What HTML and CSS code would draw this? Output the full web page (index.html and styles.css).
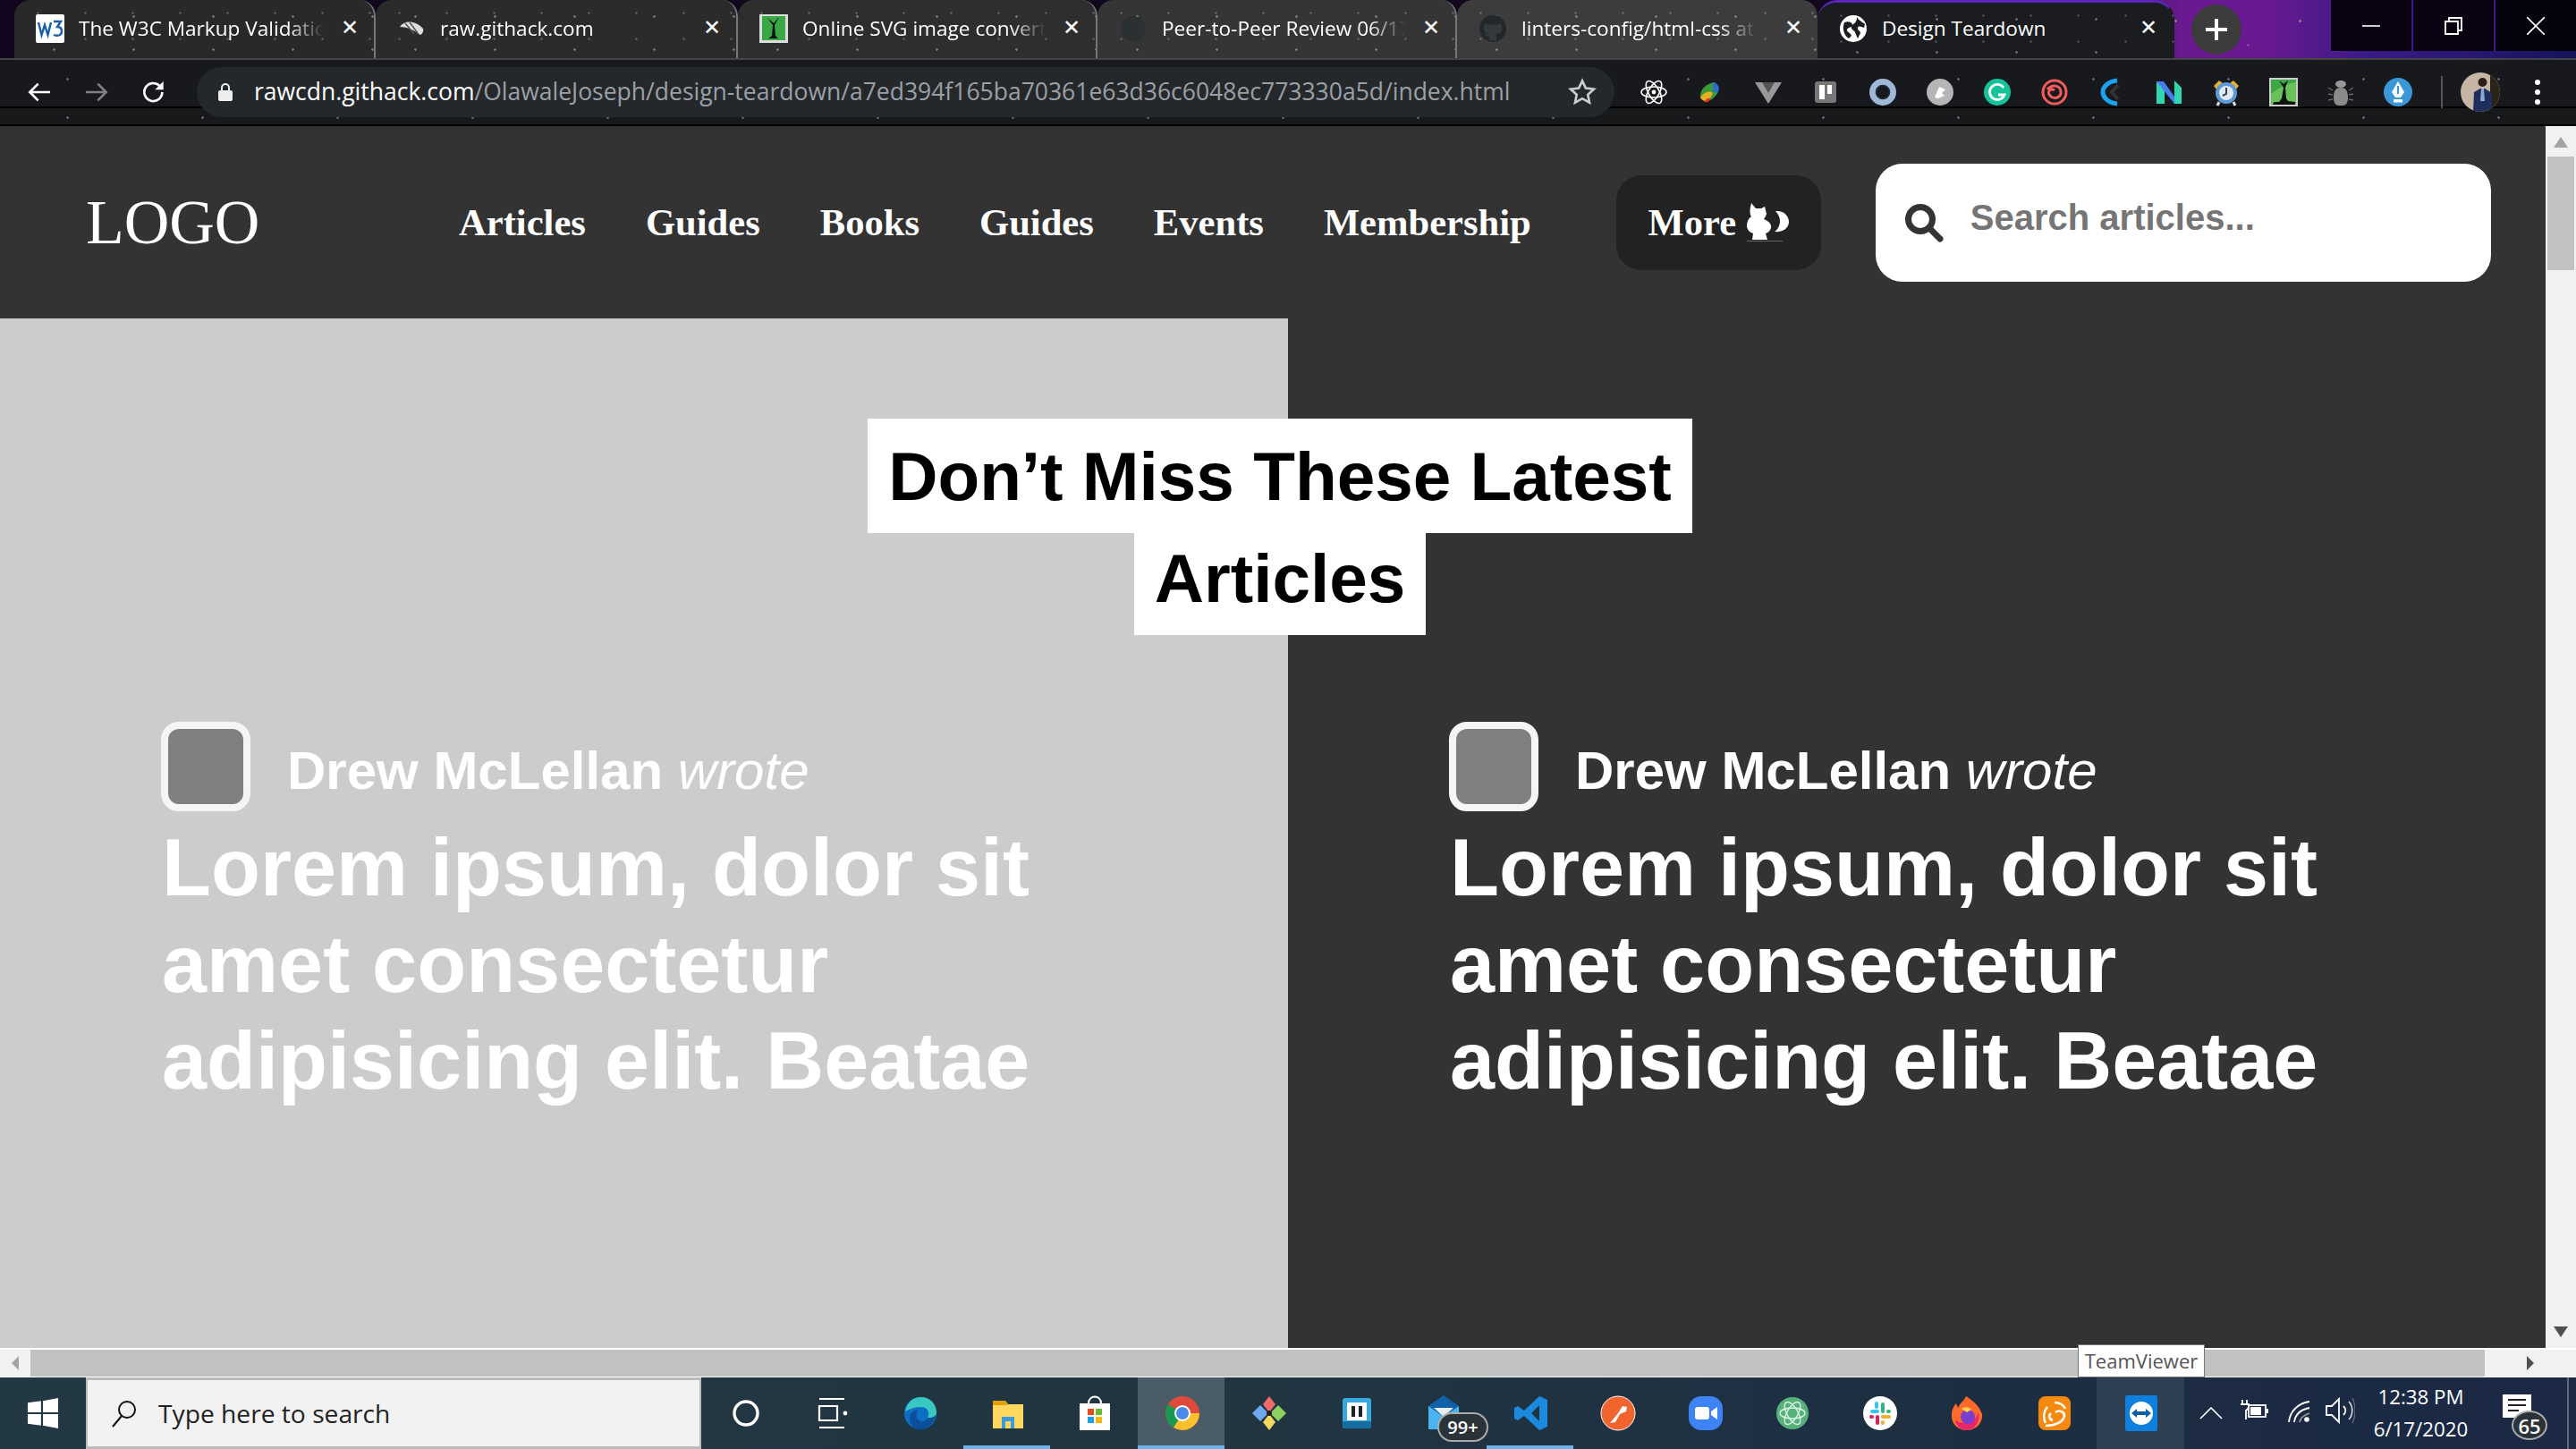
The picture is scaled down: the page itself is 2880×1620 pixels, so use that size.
FILE: index.html
```html
<!DOCTYPE html>
<html lang="en">
<head>
<meta charset="utf-8">
<title>Design Teardown</title>
<link rel="stylesheet" href="styles.css">
</head>
<body>
<div class="window">
  <div class="tabstrip">
    <div class="tab t1">
      <svg class="fav" viewBox="0 0 32 32"><rect width="32" height="32" rx="2" fill="#fff"/><path d="M3 9l3.5 14L10 12l3.5 11L17 9" fill="none" stroke="#1a5fa8" stroke-width="2.4"/><path d="M20 8h8l-4 6c3 0 5 2 5 5 0 4-4 6-9 4" fill="none" stroke="#1a5fa8" stroke-width="2.4"/></svg>
      <span class="tab-title">The W3C Markup Validation</span><span class="x">✕</span>
    </div>
    <div class="tab t2">
      <svg class="fav" viewBox="0 0 32 32"><path d="M3 14C8 7 19 6 29 16c1 3-1 6-3 7C18 17 10 14 3 14z" fill="#ddd"/><path d="M9 10l10 12M14 9l9 12" stroke="#555" stroke-width="1.5"/></svg>
      <span class="tab-title">raw.githack.com</span><span class="x">✕</span>
    </div>
    <div class="tab t3">
      <svg class="fav" viewBox="0 0 32 32"><rect width="32" height="32" fill="#ddd"/><rect x="3" y="2" width="26" height="27" fill="#3aa845"/><path d="M15 12l-6-8 7 6 6-7-5 9 1 12 3 3H10l4-3z" fill="#111"/></svg>
      <span class="tab-title">Online SVG image converter</span><span class="x">✕</span>
    </div>
    <div class="tab t4">
      <svg class="fav" viewBox="0 0 32 32"><circle cx="16" cy="16" r="14" fill="#2b3032"/></svg>
      <span class="tab-title">Peer-to-Peer Review 06/17</span><span class="x">✕</span>
    </div>
    <div class="tab t5">
      <svg class="fav" viewBox="0 0 32 32"><circle cx="16" cy="16" r="15" fill="#22272a"/><path d="M12 29v-5c-4 1-5-1-6-3 3 1 4 2 6 1-5-1-7-4-6-9l1-3 4 2c3-1 7-1 10 0l4-2 1 3c1 5-1 8-6 9v7z" fill="#34393c"/></svg>
      <span class="tab-title">linters-config/html-css at master</span><span class="x">✕</span>
    </div>
    <div class="tab active">
      <svg class="fav" viewBox="0 0 32 32"><circle cx="16" cy="16" r="15" fill="#fff"/><path d="M6 9c5-2 9 0 9 3s-5 2-6 5 4 3 5 7l-3 3C6 24 3 16 6 9zM20 3c2 4 7 6 9 8l-1 4c-3-1-6-3-7 0s3 3 3 6l-3 6c-2-3-2-7-5-9s-3-5 0-7 4-4 4-8z" fill="#1b1e20"/></svg>
      <span class="tab-title">Design Teardown</span><span class="x">✕</span>
    </div>
    <div class="newtab"><svg class="plus" viewBox="0 0 24 24"><path d="M12 0v24M0 12h24" stroke="#fff" stroke-width="4"/></svg></div>
    <div class="winctl">
      <span class="wbtn"><svg class="wicon" viewBox="0 0 20 20"><path d="M0 10h20" stroke="#fff" stroke-width="1.6"/></svg></span>
      <span class="wbtn"><svg class="wicon" viewBox="0 0 20 20"><path d="M1 5h14v14H1zM5 5V1h14v14h-4" fill="none" stroke="#fff" stroke-width="1.8"/></svg></span>
      <span class="wbtn"><svg class="wicon" viewBox="0 0 20 20"><path d="M0 0l20 20M20 0L0 20" stroke="#fff" stroke-width="1.6"/></svg></span>
    </div>
  </div>

  <div class="toolbar">
    <div class="navbtns">
      <svg class="navicon" viewBox="0 0 24 24"><path d="M21 12H4M11 5l-7 7 7 7" fill="none" stroke="#fff" stroke-width="2"/></svg>
      <svg class="navicon" viewBox="0 0 24 24"><path d="M3 12h17M13 5l7 7-7 7" fill="none" stroke="#808080" stroke-width="2"/></svg>
      <svg class="navicon" viewBox="0 0 24 24"><path d="M19 12a7.500 7.500 0 1 1-2.200-5.300" fill="none" stroke="#fff" stroke-width="2"/><path d="M20 3v7h-7z" fill="#fff"/></svg>
    </div>
    <div class="omnibox">
      <svg class="lock" viewBox="0 0 16 22"><path d="M4 10V6a4 4 0 0 1 8 0v4" fill="none" stroke="#eee" stroke-width="2"/><rect x="0" y="9" width="16" height="12" rx="2" fill="#eee"/></svg>
      <span class="url"><span class="host">rawcdn.githack.com</span>/OlawaleJoseph/design-teardown/a7ed394f165ba70361e63d36c6048ec773330a5d/index.html</span>
      <svg class="star" viewBox="0 0 24 24"><path d="M12 2.500l2.900 6.200 6.800.8-5 4.600 1.300 6.700-6-3.400-6 3.400 1.300-6.700-5-4.600 6.800-.8z" fill="none" stroke="#ccc" stroke-width="2"/></svg>
    </div>
    <div class="exts">
      <svg class="ext" viewBox="0 0 32 32"><g fill="none" stroke="#fff" stroke-width="1.6"><ellipse cx="16" cy="16" rx="14" ry="6"/><ellipse cx="16" cy="16" rx="14" ry="6" transform="rotate(60 16 16)"/><ellipse cx="16" cy="16" rx="14" ry="6" transform="rotate(120 16 16)"/></g><circle cx="16" cy="16" r="2.4" fill="#fff"/></svg>
      <svg class="ext" viewBox="0 0 32 32"><path d="M4 22C3 12 12 6 20 5c4 5 5 10 2 14-4 5-8 7-12 7z" fill="#3a9a3a"/><path d="M4 22c4-6 10-8 14-5l-4 8c-4 2-8 1-10-3z" fill="#e8b020"/><path d="M18 5c6 1 9 7 5 12l-5-2z" fill="#2a70c8"/><path d="M8 27c2-3 4-5 8-4-2 3-4 5-8 4z" fill="#d83a2a"/></svg>
      <svg class="ext" viewBox="0 0 32 32"><path d="M1 5h30L16 29z" fill="#999"/><path d="M9 5h14l-7 12z" fill="#555"/></svg>
      <svg class="ext" viewBox="0 0 32 32"><rect x="4" y="4" width="24" height="24" rx="3" fill="#777"/><rect x="9" y="8" width="6" height="16" fill="#fff"/><rect x="18" y="8" width="5" height="10" fill="#fff"/></svg>
      <svg class="ext" viewBox="0 0 32 32"><circle cx="16" cy="16" r="11.500" fill="none" stroke="#9fb8d8" stroke-width="7"/><circle cx="16" cy="16" r="7.500" fill="none" stroke="#20303c" stroke-width="1.6"/></svg>
      <svg class="ext" viewBox="0 0 32 32"><circle cx="16" cy="16" r="15" fill="#b5b5b5"/><path d="M10 22l5-12 7 3-4 4 3 3-7 3z" fill="#fff"/></svg>
      <svg class="ext" viewBox="0 0 32 32"><circle cx="16" cy="16" r="15" fill="#15c39a"/><path d="M23 11a8.500 8.500 0 1 0 1 8h-7" fill="none" stroke="#fff" stroke-width="2.8"/></svg>
      <svg class="ext" viewBox="0 0 32 32"><g fill="none" stroke="#f25c5c" stroke-width="3"><circle cx="16" cy="16" r="13"/><path d="M8 13c5-6 14-5 15 2s-8 10-12 5 1-9 5-6"/></g></svg>
      <svg class="ext" viewBox="0 0 32 32"><path d="M22 3C12 4 6 10 6 16s6 12 16 13" fill="none" stroke="#1aa3f0" stroke-width="5"/><path d="M23 8l-7 8 7 8" fill="none" stroke="#333" stroke-width="4"/></svg>
      <svg class="ext" viewBox="0 0 32 32"><path d="M2 4l9 7v18H2z" fill="#2fd6b0"/><path d="M2 4h8l12 17v8L2 4z" fill="#4a7af0"/><path d="M22 3l8 8-8 2zM22 13l8-2v18h-8z" fill="#2fd6b0"/></svg>
      <svg class="ext" viewBox="0 0 32 32"><path d="M2 9l6-6 4 3-7 7zM30 9l-6-6-4 3 7 7z" fill="#e8b030"/><path d="M8 27l-2 4M24 27l2 4" stroke="#ddd" stroke-width="3"/><circle cx="16" cy="17" r="12" fill="#5c9ad8"/><circle cx="16" cy="17" r="8" fill="#dfe9f4"/><path d="M16 11v7l-4 2" stroke="#345" stroke-width="2" fill="none"/></svg>
      <svg class="ext" viewBox="0 0 32 32"><rect width="32" height="32" fill="#ccc"/><rect x="2" y="2" width="28" height="28" fill="#3aa845"/><path d="M2 18c8-6 18-12 28-13v25H2z" fill="#6ac15a"/><path d="M16 11l-5-8 5 4 5-4-3 8 1 12 2 3 8 1v3H4l1-3h6l3-4z" fill="#111"/></svg>
      <svg class="ext" viewBox="0 0 32 32"><ellipse cx="16" cy="7" rx="6" ry="4" fill="#999"/><path d="M8 22c0-8 3-11 8-11s8 3 8 11-3 9-8 9-8-1-8-9z" fill="#8a8a8a"/><path d="M2 11l5 3M2 18l5 1M2 25l5-1M30 11l-5 3M30 18l-5 1M30 25l-5-1" stroke="#666" stroke-width="1.4"/></svg>
      <svg class="ext" viewBox="0 0 32 32"><circle cx="16" cy="16" r="16" fill="#3a98d8"/><path d="M16 4l7 12-4 6h-6l-4-6z" fill="#fff"/><path d="M16 9v9" stroke="#3a98d8" stroke-width="2"/><rect x="11" y="24" width="10" height="3.500" fill="#fff"/></svg>
      <span class="ext-divider"></span>
      <svg class="avatar-me" viewBox="0 0 44 44"><defs><clipPath id="me"><circle cx="22" cy="22" r="22"/></clipPath></defs><g clip-path="url(#me)"><rect width="44" height="44" fill="#c6b4a4"/><rect x="33" width="11" height="44" fill="#2a2418"/><path d="M14 44l1-22 7-4h5l8 5v21z" fill="#1d2f5a"/><path d="M23 18h3l1 14h-5z" fill="#8aa8d0"/><circle cx="24.500" cy="11" r="5" fill="#2c1e16"/></g></svg>
      <span class="dots"><i></i><i></i><i></i></span>
    </div>
  </div>

  <div class="viewport">
    <div class="page">
      <header class="site-header">
        <div class="logo">LOGO</div>
        <nav class="site-nav">
          <a>Articles</a><a>Guides</a><a>Books</a><a>Guides</a><a>Events</a><a>Membership</a>
        </nav>
        <button class="more">More
          <svg class="cat" viewBox="0 0 47 43"><path d="M5 0l5 6h6l4-2 2 8c-1 3-2 5-3 6 5 2 9 5 8 10-1 3-3 5-6 6l2 7H6l1-7c-4-1-7-4-7-9 0-4 2-8 5-10-2-3-2-7 0-15z" fill="#fff"/><path d="M32 9c9-1 15 5 15 12s-7 12-16 11c4-3 6-7 6-12 0-4-2-8-5-11z" fill="#fff"/><rect y="42" width="40" height="1" fill="#666"/></svg>
        </button>
        <div class="search">
          <svg class="search-icon" viewBox="0 0 44 44"><circle cx="18" cy="18" r="13.500" fill="none" stroke="#333" stroke-width="7"/><path d="M28 28l12 12" stroke="#333" stroke-width="7" stroke-linecap="round"/></svg>
          <span class="placeholder">Search articles...</span>
        </div>
      </header>
      <main class="content">
        <h1 class="headline"><span>Don’t Miss These Latest Articles</span></h1>
        <div class="cards">
          <article class="card">
            <div class="author"><span class="avatar"></span><span class="byline"><b>Drew McLellan</b> <em>wrote</em></span></div>
            <h2>Lorem ipsum, dolor sit amet consectetur adipisicing elit. Beatae</h2>
          </article>
          <article class="card">
            <div class="author"><span class="avatar"></span><span class="byline"><b>Drew McLellan</b> <em>wrote</em></span></div>
            <h2>Lorem ipsum, dolor sit amet consectetur adipisicing elit. Beatae</h2>
          </article>
        </div>
      </main>
    </div>
    <div class="vscroll">
      <span class="arrow up"></span>
      <span class="vthumb"></span>
      <span class="arrow down"></span>
    </div>
  </div>

  <div class="hscroll">
    <span class="harrow left"></span>
    <span class="hthumb"></span>
    <span class="harrow right"></span>
    <span class="tooltip">TeamViewer</span>
  </div>

  <div class="taskbar">
    <div class="start"><svg class="win" viewBox="0 0 32 32"><path d="M0 5l14-2v12H0zM16 3l16-3v15H16zM0 17h14v12L0 27zM16 17h16v15l-16-3z" fill="#fff"/></svg></div>
    <div class="tsearch">
      <svg class="tsearch-icon" viewBox="0 0 32 32"><circle cx="20" cy="12" r="9" fill="none" stroke="#111" stroke-width="2"/><path d="M14 19L4 31" stroke="#111" stroke-width="2"/></svg>
      <span>Type here to search</span>
    </div>
    <div class="apps">
      <span class="app"><svg class="ico" viewBox="0 0 40 40"><circle cx="20" cy="20" r="13" fill="none" stroke="#fff" stroke-width="3.4"/></svg></span>
      <span class="app"><svg class="ico" viewBox="0 0 40 40"><path d="M4 4h28M4 36h28M4 12h20v16H4z" fill="none" stroke="#fff" stroke-width="2.2"/><circle cx="33" cy="20" r="2.4" fill="#fff"/></svg></span>
      <span class="app"><svg class="ico" viewBox="0 0 40 40"><circle cx="20" cy="20" r="18" fill="#0d6fc4"/><path d="M3 18C5 6 14 2 21 2c9 0 17 7 17 17 0 6-6 7-10 6 3-5 1-12-8-12-7 0-13 3-17 5z" fill="#38c8c0"/><path d="M28 25c3 0 10 0 10-6 0 4-3 15-15 19C15 40 8 34 8 25c0-5 5-9 10-9-4 4-3 12 3 13 3 1 5-2 7-4z" fill="#0b4f9c"/></svg></span>
      <span class="app under"><svg class="ico" viewBox="0 0 40 40"><path d="M3 6h14l3 4h17v27H3z" fill="#ffd75e"/><path d="M3 6h14l3 5H3z" fill="#dfa000"/><path d="M13 37V24h14v13h-4v-8h-6v8z" fill="#3a9ce0"/></svg></span>
      <span class="app"><svg class="ico" viewBox="0 0 40 40"><path d="M13 9c0-10 14-10 14 0" fill="none" stroke="#fff" stroke-width="2"/><rect x="3" y="9" width="34" height="30" fill="#fff"/><rect x="12" y="15" width="7" height="7" fill="#e84c1e"/><rect x="21" y="15" width="7" height="7" fill="#6cb82e"/><rect x="12" y="24" width="7" height="7" fill="#1ea0e8"/><rect x="21" y="24" width="7" height="7" fill="#fbb800"/></svg></span>
      <span class="app current"><svg class="ico" viewBox="0 0 40 40"><circle cx="20" cy="20" r="19" fill="#e04a3a"/><path d="M20 20L39 20A19 19 0 0 1 10 36z" fill="#fbc02d"/><path d="M20 20L10 36A19 19 0 0 1 4 10z" fill="#1a9a50"/><circle cx="20" cy="20" r="9" fill="#fff"/><circle cx="20" cy="20" r="7" fill="#4a8ae8"/></svg></span>
      <span class="app"><svg class="ico" viewBox="0 0 40 40"><path d="M20 1l7 9-7 9-7-9z" fill="#ef6a6a"/><path d="M10 11l9 9-9 9-9-9z" fill="#6fa8f0"/><path d="M30 11l9 9-9 9-9-9z" fill="#8ed060"/><path d="M20 21l7 9-7 9-7-9z" fill="#f5d860"/><circle cx="20" cy="20" r="3" fill="#222"/></svg></span>
      <span class="app"><svg class="ico" viewBox="0 0 40 40"><rect x="4" y="3" width="32" height="34" rx="3" fill="#37a8e0"/><rect x="4" y="29" width="32" height="8" rx="2" fill="#146ea0"/><rect x="9" y="8" width="22" height="20" fill="#fff"/><path d="M14 12h4v12h-4zM22 12h4v12h-4z" fill="#222"/></svg></span>
      <span class="app mail"><svg class="ico" viewBox="0 0 40 40"><rect x="3" y="12" width="34" height="26" fill="#4ab4f0"/><path d="M3 12L20 0l17 12L20 24z" fill="#0f62aa"/><path d="M9 14h22L20 24z" fill="#e8eef4"/></svg><span class="badge b99">99+</span></span>
      <span class="app under"><svg class="ico" viewBox="0 0 40 40"><path d="M29 1l9 4v30l-9 4-17-16-7 5-4-2V14l4-2 7 5zM29 11l-9 9 9 9z" fill="#1a8ade"/></svg></span>
      <span class="app"><svg class="ico" viewBox="0 0 40 40"><circle cx="20" cy="20" r="19" fill="#f2642e" stroke="#fff" stroke-width="1"/><path d="M11 31l9-11 5-8 5 1-1 5-7 3-5 9z" fill="#fff"/></svg></span>
      <span class="app"><svg class="ico" viewBox="0 0 40 40"><rect x="1" y="1" width="38" height="38" rx="14" fill="#3d83f5"/><rect x="8" y="13" width="16" height="14" rx="3" fill="#fff"/><path d="M26 18l7-5v14l-7-5z" fill="#fff"/></svg></span>
      <span class="app"><svg class="ico" viewBox="0 0 40 40"><circle cx="20" cy="20" r="18" fill="#55b37a"/><g fill="none" stroke="#dff3e6" stroke-width="1.4"><ellipse cx="20" cy="20" rx="14" ry="6"/><ellipse cx="20" cy="20" rx="14" ry="6" transform="rotate(60 20 20)"/><ellipse cx="20" cy="20" rx="14" ry="6" transform="rotate(120 20 20)"/></g></svg></span>
      <span class="app"><svg class="ico" viewBox="0 0 40 40"><circle cx="20" cy="20" r="19" fill="#fff"/><rect x="9" y="16" width="10" height="4" rx="2" fill="#36c5f0"/><rect x="14" y="7" width="4" height="8" rx="2" fill="#36c5f0"/><rect x="21" y="8" width="4" height="12" rx="2" fill="#2eb67d"/><rect x="27" y="16" width="5" height="4" rx="2" fill="#2eb67d"/><rect x="8" y="22" width="5" height="4" rx="2" fill="#e01e5a"/><rect x="15" y="22" width="4" height="11" rx="2" fill="#e01e5a"/><rect x="21" y="22" width="11" height="4" rx="2" fill="#ecb22e"/><rect x="21" y="28" width="4" height="5" rx="2" fill="#ecb22e"/></svg></span>
      <span class="app"><svg class="ico" viewBox="0 0 40 40"><path d="M20 39C9 39 2 31 3 21c0-5 3-10 5-12l2 5c2-5 7-8 9-13 8 5 15 11 18 20 1 10-7 18-17 18z" fill="#ff6a2a"/><path d="M20 39c-7 0-12-5-13-11 5 3 12 4 19 0 4-2 6-6 7-9 2 10-4 20-13 20z" fill="#e8266c"/><circle cx="21" cy="24" r="8" fill="#7b3fd0"/><path d="M14 15c4-3 9-2 11 1l-5 3z" fill="#ffd24a"/></svg></span>
      <span class="app"><svg class="ico" viewBox="0 0 40 40"><rect x="2" y="1" width="36" height="38" rx="8" fill="#f78a0c"/><path d="M10 34c10 0 20-4 21-11 0-5-6-7-10-4M20 8c6 0 10 3 12 7M12 13c-4 5-5 12-2 18M18 28c-4-1-5-6-2-8" fill="none" stroke="#fff" stroke-width="2.6"/></svg></span>
      <span class="app hover"><svg class="ico" viewBox="0 0 40 40"><rect x="2" width="36" height="40" rx="2" fill="#0e7fdc"/><circle cx="20" cy="20" r="13" fill="#fff"/><path d="M9 20l6-5v3h10v-3l6 5-6 5v-3H15v3z" fill="#0e5ea8"/></svg></span>
    </div>
    <div class="tray">
      <svg class="t-chev" viewBox="0 0 26 14"><path d="M1 13L13 1l12 12" fill="none" stroke="#fff" stroke-width="1.6"/></svg>
      <svg class="t-power" viewBox="0 0 32 24"><path d="M3 1v5M8 1v5M1 6h9v4l-3 3v10" fill="none" stroke="#fff" stroke-width="1.8"/><rect x="10" y="7" width="19" height="13" fill="none" stroke="#fff" stroke-width="1.8"/><rect x="12" y="9" width="12" height="9" fill="#fff"/><rect x="30" y="11" width="2" height="5" fill="#fff"/></svg>
      <svg class="t-wifi" viewBox="0 0 25 24"><g fill="none" stroke-width="1.8"><path d="M1 24C2 12 11 3 24 1" stroke="#fff"/><path d="M7 24c1-8 7-14 17-16" stroke="#fff"/><path d="M13 24c1-5 5-8 11-10" stroke="#999"/></g><circle cx="21" cy="21" r="2.8" fill="#fff"/></svg>
      <svg class="t-vol" viewBox="0 0 33 30"><path d="M1 10h6l8-8v26l-8-8H1z" fill="none" stroke="#fff" stroke-width="1.8"/><path d="M20 10c3 3 3 7 0 10" fill="none" stroke="#fff" stroke-width="1.8"/><path d="M26 5c5 5 5 15 0 20" fill="none" stroke="#ddd" stroke-width="1.6"/><path d="M30 1c4 8 4 20 0 28" fill="none" stroke="#667" stroke-width="1.4"/></svg>
    </div>
    <div class="clock"><span>12:38 PM</span><span>6/17/2020</span></div>
    <div class="notif">
      <svg class="notif-ico" viewBox="0 0 32 26"><rect width="32" height="26" fill="#fff"/><path d="M6 6h20M6 12h20M6 18h12" stroke="#222" stroke-width="2"/></svg>
      <span class="badge b65">65</span>
    </div>
  </div>
</div>
</body>
</html>
```
FILE: styles.css
```css
* { box-sizing: border-box; }
html, body { margin: 0; padding: 0; width: 2880px; height: 1620px; overflow: hidden; }
body { font-family: "Liberation Sans", Arial, sans-serif; background: #222; }
svg { display: block; flex: none; }

.window { width: 2880px; height: 1620px; display: flex; flex-direction: column; }

/* tab strip */
.tabstrip {
  height: 67px; flex: none; display: flex; align-items: flex-start; padding-left: 16px;
  position: relative; border-bottom: 2px solid #444;
  background:
    radial-gradient(circle, #8a8a8a 1px, transparent 1.6px) 0 0 / 139px 47px,
    radial-gradient(circle, #7a4aa8 1px, transparent 1.6px) 40px 20px / 97px 61px,
    linear-gradient(90deg, #12061e 0, #14081e 2300px, #6a1a90 2440px, #6a1a90 2530px, #3a1a88 2650px, #14145c 2880px);
  font-family: "Open Sans", "Noto Sans", sans-serif;
}
.tab {
  height: 65px; display: flex; align-items: center; padding: 0 14px 2px 24px; gap: 16px;
  flex: none; border-right: 2px solid transparent; color: #fff; font-size: 22.6px;
  border-radius: 18px 18px 0 0; background-clip: border-box;
  background-image: radial-gradient(circle, rgba(255,255,255,.35) 1px, transparent 1.6px), radial-gradient(circle, rgba(255,255,255,.2) 1px, transparent 1.6px);
  background-size: 89px 37px, 53px 29px;
}
.t1 { width: 404px; background-color: #292929; border-right-color: #777; }
.t2 { width: 405px; background-color: #2b2b2b; border-right-color: #777; }
.t3 { width: 402px; background-color: #2e2e2e; border-right-color: #777; }
.t4 { width: 402px; background-color: #353535; border-right-color: #777; }
.t5 { width: 403px; background-color: #3c3c3c; border-right: 0; }
.tab.active { width: 399px; background-color: #1a1c1f; border-top: 3px solid #5a25b8; border-radius: 22px 22px 0 0; padding-bottom: 5px; }
.fav { width: 32px; height: 32px; }
.tab-title {
  flex: 1; min-width: 0; white-space: nowrap; overflow: hidden; padding-bottom: 1px;
  -webkit-mask-image: linear-gradient(90deg, #000 85%, transparent 100%);
  mask-image: linear-gradient(90deg, #000 85%, transparent 100%);
}
.t5 .tab-title { -webkit-mask-image: linear-gradient(90deg, #000 80%, transparent 96%); mask-image: linear-gradient(90deg, #000 80%, transparent 96%); }
.active .tab-title { -webkit-mask-image: none; mask-image: none; }
.x { font-size: 24px; width: 26px; text-align: center; flex: none; font-family: "DejaVu Sans", sans-serif; padding-bottom: 2px; }
.newtab {
  width: 56px; height: 56px; border-radius: 50%; background: #3c3c3c;
  margin: 5px 0 0 19px; flex: none; display: flex; align-items: center; justify-content: center;
}
.plus { width: 24px; height: 24px; }
.winctl {
  position: absolute; top: 0; right: 0; width: 274px; height: 57px; background: #0a0212;
  display: flex;
}
.wbtn { flex: 1; display: flex; align-items: center; justify-content: center; border-right: 2px solid #3a1a90; }
.wbtn:last-child { border-right: 0; background: #06020e; }
.wicon { width: 20px; height: 20px; }

/* toolbar */
.toolbar {
  height: 74px; flex: none; display: flex; align-items: center; border-bottom: 2px solid #000;
  background:
    radial-gradient(circle, #667 1px, transparent 1.6px) 0 0 / 151px 43px,
    linear-gradient(180deg, #17191c 0, #17191c 52px, #000 52px, #000 54px, #17191b 54px);
}
.navbtns { display: flex; width: 220px; padding-left: 28px; gap: 32px; flex: none; }
.navicon { width: 32px; height: 32px; }
.omnibox {
  width: 1585px; height: 56px; border-radius: 28px; background: #25282b; flex: none;
  display: flex; align-items: center; padding: 0 20px 0 24px; gap: 24px;
  font-family: "Open Sans", "Noto Sans", sans-serif; font-size: 26.5px; color: #9aa0a6;
}
.lock { width: 16px; height: 22px; }
.url { flex: 1; white-space: nowrap; overflow: hidden; padding-bottom: 2px; }
.host { color: #fff; }
.star { width: 32px; height: 32px; }
.exts { display: flex; align-items: center; flex: 1; padding-left: 28px; }
.ext { width: 32px; height: 32px; margin-right: 32px; }
.ext-divider { width: 2px; height: 36px; background: #555; margin-right: 20px; }
.avatar-me { width: 44px; height: 44px; }
.dots { display: flex; flex-direction: column; gap: 5px; margin-left: 39px; }
.dots i { width: 6px; height: 6px; border-radius: 50%; background: #fff; display: block; }

/* viewport */
.viewport { flex: 1; display: flex; min-height: 0; }
.page { flex: 1; min-width: 0; display: flex; flex-direction: column; background: #333; }
.site-header {
  height: 215px; flex: none; display: flex; align-items: center; padding-left: 96px;
  color: #fff; background: #333;
}
.logo { font: 400 70px "Liberation Serif", serif; width: 417px; flex: none; }
.site-nav { display: flex; gap: 67px; font: 700 42.6px "Liberation Serif", serif; flex: none; }
.more {
  margin-left: 95px; width: 229px; height: 106px; border: 0; border-radius: 28px; background: #222;
  color: #fff; font: 700 42.6px "Liberation Serif", serif; display: flex; align-items: center; justify-content: center; gap: 12px; padding: 0;
}
.cat { width: 47px; height: 43px; }
.search {
  margin-left: 61px; width: 688px; height: 132px; background: #fff; border-radius: 30px;
  display: flex; align-items: center; padding: 0 0 10px 32px; gap: 30px; flex: none;
}
.search-icon { width: 44px; height: 44px; margin-top: 10px; }
.placeholder { font: 700 40px "Liberation Sans", sans-serif; color: #757575; }

.content { flex: 1; background: linear-gradient(90deg, #ccc 1440px, #333 1440px); padding-top: 120px; min-height: 0; }
.headline {
  margin: 0 auto; width: 1000px; padding-left: 16px; box-sizing: content-box;
  text-align: center; font: 700 76.5px/114px "Liberation Sans", sans-serif; color: #000;
}
.headline span {
  background: #fff; padding: 22px 23px 21px;
  -webkit-box-decoration-break: clone; box-decoration-break: clone;
}
.cards { display: grid; grid-template-columns: 1440px 1fr; margin-top: 103px; }
.card { padding: 0 180px; color: #fff; }
.author { display: flex; align-items: center; gap: 41px; height: 100px; }
.avatar { width: 100px; height: 100px; border: 8px solid #f5f5f5; border-radius: 20px; background: #808080; flex: none; }
.byline { font-size: 60px; line-height: 100px; padding-top: 10px; }
.byline b { font-weight: 700; }
.byline em { font-style: italic; font-weight: 400; }
.card h2 { margin: 9px 0 0 1px; font: 700 90px/108px "Liberation Sans", sans-serif; }

.vscroll { width: 34px; flex: none; background: #f1f1f1; display: flex; flex-direction: column; align-items: center; }
.arrow { width: 0; height: 0; border-left: 8px solid transparent; border-right: 8px solid transparent; flex: none; }
.arrow.up { border-bottom: 12px solid #a3a3a3; margin-top: 12px; }
.arrow.down { border-top: 12px solid #505050; margin-top: auto; margin-bottom: 12px; }
.vthumb { width: 30px; height: 127px; background: #c1c1c1; margin-top: 10px; flex: none; }

.hscroll {
  height: 33px; flex: none; display: flex; background: #f1f1f1; border-top: 2px solid #fff; border-bottom: 1px solid #fff; align-items: stretch; position: relative;
}
.harrow { width: 34px; flex: none; display: flex; align-items: center; justify-content: center; }
.harrow::before { content: ""; border-top: 8px solid transparent; border-bottom: 8px solid transparent; }
.harrow.left::before { border-right: 8px solid #a3a3a3; }
.harrow.right { width: 102px; }
.harrow.right::before { border-left: 8px solid #505050; }
.hthumb { flex: 1; background: #c1c1c1; }
.tooltip {
  position: absolute; left: 2323px; top: -6px; width: 142px; height: 37px; background: #fff;
  border: 1px solid #777; color: #555; font: 22px/34px "Open Sans", "Noto Sans", sans-serif; text-align: center; white-space: nowrap;
}

/* taskbar */
.taskbar {
  height: 80px; flex: none; display: flex; align-items: stretch; color: #fff;
  background: linear-gradient(90deg, #223843 0, #213541 1400px, #1d2d42 2300px, #1a2844 2880px);
  font-family: "Open Sans", "Noto Sans", sans-serif;
}
.start { width: 96px; flex: none; display: flex; align-items: center; justify-content: center; }
.win { width: 34px; height: 34px; }
.tsearch {
  width: 688px; flex: none; background: #f2f2f2; border: 2px solid #bbb; border-width: 3px 2px;
  display: flex; align-items: center; gap: 23px; padding: 0 0 0 24px; color: #222; font-size: 28.2px;
}
.tsearch-icon { width: 32px; height: 32px; }
.apps { display: flex; flex: none; }
.app { width: 97.5px; flex: none; display: flex; align-items: center; justify-content: center; position: relative; }
.ico { width: 40px; height: 40px; margin-left: 3px; }
.app.current, .app.under { box-shadow: inset 0 -4px 0 #6cb2ec; }
.app.current { background: #4a5c66; }
.app.hover { background: #2e3f54; }
.badge {
  position: absolute; border-radius: 50%; background: #2a3338; border: 2px solid #aaa; color: #fff;
  font-size: 20px; font-weight: 600; display: flex; align-items: center; justify-content: center;
}
.b99 { width: 57px; height: 33px; left: 43px; bottom: 8px; border-radius: 17px; }
.b65 { width: 40px; height: 33px; right: 32px; top: 37px; font-size: 22px; }
.tray { display: flex; align-items: center; padding-left: 17px; flex: none; width: 203px; }
.t-chev { width: 26px; height: 14px; }
.t-power { width: 32px; height: 24px; margin-left: 19px; margin-top: -8px; }
.t-wifi { width: 25px; height: 24px; margin-left: 22px; margin-top: -4px; }
.t-vol { width: 33px; height: 30px; margin-left: 17px; margin-top: -6px; }
.clock { width: 124px; flex: none; display: flex; flex-direction: column; justify-content: center; align-items: center; font-size: 22.3px; line-height: 36px; white-space: nowrap; }
.notif { flex: 1; position: relative; display: flex; align-items: center; padding-left: 29px; }
.notif::after { content: ""; position: absolute; right: 8px; top: 0; bottom: 0; width: 2px; background: #5a6a80; }
.notif-ico { width: 32px; height: 26px; margin-top: -16px; }
```
